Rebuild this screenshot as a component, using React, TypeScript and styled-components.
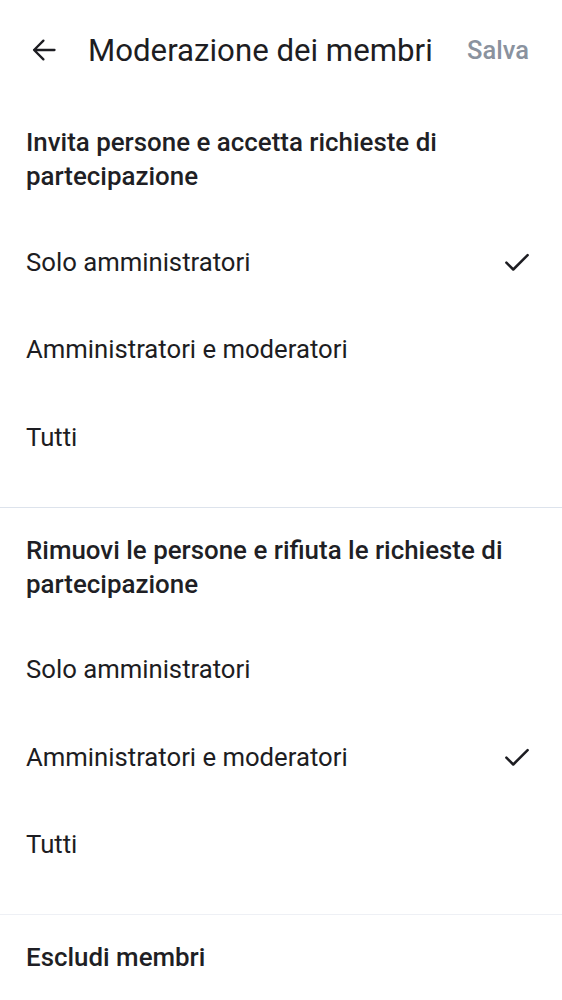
import React from "react";
import styled, { createGlobalStyle } from "styled-components";

const Global = createGlobalStyle`
  html, body { margin: 0; padding: 0; background: #ffffff; }
  body { font-family: Roboto, "Noto Sans", sans-serif; color: #1d1d22; -webkit-font-smoothing: antialiased; }
  * { box-sizing: border-box; }
`;

const Page = styled.div`
  width: 562px;
  min-height: 1000px;
  background: #fff;
  display: flex;
  flex-direction: column;
`;

const Header = styled.header`
  height: 100px;
  display: flex;
  align-items: center;
  padding: 0 33px 0 29px;
`;

const BackButton = styled.button`
  width: 30px;
  height: 30px;
  padding: 0;
  border: 0;
  background: none;
  display: flex;
  align-items: center;
  justify-content: center;
  color: #1d1d22;
  margin-right: 29px;
`;

const Title = styled.h1`
  flex: 1;
  margin: 0;
  font-size: 31.2px;
  font-weight: 400;
  letter-spacing: 0;
  color: #1d1d22;
  white-space: nowrap;
`;

const SaveButton = styled.button`
  border: 0;
  background: none;
  padding: 0;
  font-family: inherit;
  font-size: 25.5px;
  font-weight: 500;
  color: #8a929e;
`;

const Section = styled.section<{ $divider?: string }>`
  padding: 25px 0 26px;
  border-bottom: 1px solid ${(p) => p.$divider || "transparent"};
`;

const SectionTitle = styled.h2`
  margin: 0;
  padding: 0 26px;
  font-size: 25.9px;
  font-weight: 500;
  line-height: 34px;
  color: #1f1f25;
`;

const OptionList = styled.ul`
  list-style: none;
  margin: 25px 0 0;
  padding: 0;
`;

const Option = styled.li`
  height: 87.5px;
  display: flex;
  align-items: center;
  justify-content: space-between;
  padding: 0 30px 0 26px;
  font-size: 25.7px;
  font-weight: 400;
  color: #1d1d22;
`;

const Check = () => (
  <svg width="30" height="30" viewBox="0 0 24 24" fill="none" stroke="#1d1d22" strokeWidth="2" strokeLinecap="round" strokeLinejoin="round">
    <path d="M3.5 12.5l5.5 5.5L20.5 6.5" />
  </svg>
);

const Arrow = () => (
  <svg width="28" height="28" viewBox="0 0 24 24" fill="none" stroke="#1d1d22" strokeWidth="2" strokeLinecap="round" strokeLinejoin="round">
    <path d="M21 12H3.5M11.5 4l-8 8 8 8" />
  </svg>
);

type Group = { title: string; options: string[]; selected: number | null };

const groups: Group[] = [
  {
    title: "Invita persone e accetta richieste di partecipazione",
    options: ["Solo amministratori", "Amministratori e moderatori", "Tutti"],
    selected: 0,
  },
  {
    title: "Rimuovi le persone e rifiuta le richieste di partecipazione",
    options: ["Solo amministratori", "Amministratori e moderatori", "Tutti"],
    selected: 1,
  },
];

export default function App() {
  return (
    <Page>
      <Global />
      <Header>
        <BackButton aria-label="Indietro">
          <Arrow />
        </BackButton>
        <Title>Moderazione dei membri</Title>
        <SaveButton>Salva</SaveButton>
      </Header>
      {groups.map((g, i) => (
        <Section key={i} $divider={i === 0 ? "#dde3ec" : "#eef0f5"}>
          <SectionTitle>{g.title}</SectionTitle>
          <OptionList>
            {g.options.map((o, j) => (
              <Option key={j}>
                <span>{o}</span>
                {g.selected === j && <Check />}
              </Option>
            ))}
          </OptionList>
        </Section>
      ))}
      <Section>
        <SectionTitle>Escludi membri</SectionTitle>
      </Section>
    </Page>
  );
}
